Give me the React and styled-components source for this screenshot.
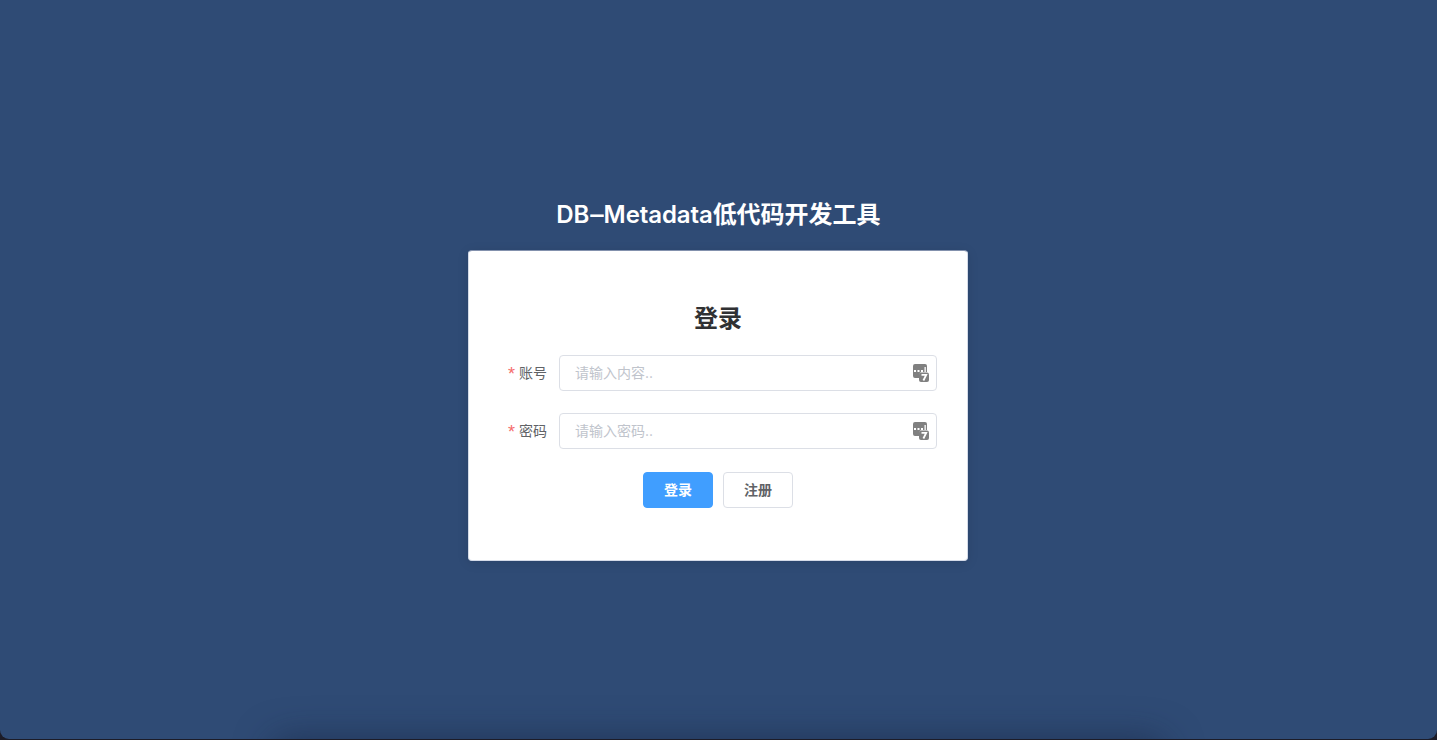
import React from "react";
import styled, { createGlobalStyle } from "styled-components";

const GlobalStyle = createGlobalStyle`
  * { box-sizing: border-box; }
  html, body { margin: 0; height: 100%; background: #1c1c28; }
  body, input, button { font-family: Inter, "Noto Sans CJK SC", sans-serif; }
`;

const Page = styled.main`
  position: relative;
  height: 739px;
  padding-top: 197px;
  display: flex;
  flex-direction: column;
  align-items: center;
  overflow: hidden;
  background: #2f4b75;
  border-radius: 0 0 9px 9px;
`;

const DockShadow = styled.div`
  position: absolute;
  left: 275px;
  right: 275px;
  bottom: -34px;
  height: 30px;
  border-radius: 20px;
  box-shadow: 0 0 36px 4px rgba(20, 32, 60, 0.55);
`;

const Title = styled.h1`
  margin: 0 0 17px;
  height: 36px;
  line-height: 36px;
  font-size: 24px;
  font-weight: 600;
  color: #fff;
  white-space: nowrap;
`;

const Latin = styled.span`
  letter-spacing: -0.1px;
`;

const Dash = styled.span`
  display: inline-block;
  transform: scaleX(1.12);
  margin: 0 1.2px;
`;

const Card = styled.form`
  width: 500px;
  height: 311px;
  margin-right: 1px;
  padding: 50px 30px 0 40px;
  display: flex;
  flex-direction: column;
  background: #fff;
  border: 1px solid #d5dbe8;
  border-top-color: #8391ad;
  border-radius: 4px;
  box-shadow: 0 2px 12px rgba(0, 0, 0, 0.1);
`;

const Heading = styled.h2`
  margin: 0 10px 18px 0;
  height: 36px;
  line-height: 36px;
  text-align: center;
  font-size: 24px;
  font-weight: 700;
  color: #303133;
`;

const Field = styled.div`
  display: flex;
  align-items: center;
  height: 36px;
  margin-bottom: ${(p) => p.$gap};
`;

const Label = styled.label`
  width: 50px;
  height: 36px;
  padding-bottom: 2px;
  flex: none;
  display: flex;
  align-items: center;
  font-size: 14px;
  color: #606266;
`;

const Required = styled.span`
  width: 11px;
  margin-left: -1px;
  font-family: "Liberation Sans", sans-serif;
  font-size: 18px;
  line-height: 20px;
  padding-top: 4px;
  color: #f56c6c;
`;

const InputBox = styled.div`
  flex: none;
  width: 378px;
  height: 36px;
  display: flex;
  align-items: center;
  padding: 0 6px 0 15px;
  border: 1px solid #dcdfe6;
  border-radius: 4px;
  background: #fff;
`;

const Input = styled.input`
  flex: 1;
  min-width: 0;
  height: 32px;
  padding: 0 0 2px;
  border: 0;
  outline: 0;
  font-size: 14px;
  color: #606266;
  background: transparent;
  &::placeholder { color: #c0c4cc; opacity: 1; }
`;

const Actions = styled.div`
  display: flex;
  justify-content: center;
  gap: 10px;
  margin-right: 10px;
`;

const Button = styled.button`
  width: 70px;
  height: 36px;
  padding: 0 0 2px;
  border: 1px solid ${(p) => (p.$primary ? "#409eff" : "#dcdfe6")};
  border-radius: 4px;
  background: ${(p) => (p.$primary ? "#409eff" : "#fff")};
  color: ${(p) => (p.$primary ? "#fff" : "#606266")};
  font-size: 14px;
  font-weight: ${(p) => (p.$primary ? 700 : 600)};
`;

const PasswordIcon = () => (
  <svg width="18" height="20" viewBox="0 0 18 20" aria-hidden="true">
    <path d="M3 1h10a2 2 0 0 1 2 2v6h-5.500a2 2 0 0 0-2 2v4H3a2 2 0 0 1-2-2V3a2 2 0 0 1 2-2Z" fill="#808080" />
    <path d="M2 7h2v2h-2zM5.500 7h2v2h-2zM9 7h2v2h-2zM12.500 4h1.300v5h-1.300z" fill="#fff" />
    <rect x="7" y="9.500" width="10" height="9.500" rx="2" fill="#808080" />
    <path d="M9.500 11.800h4.700l-2.800 5.700" fill="none" stroke="#fff" strokeWidth="1.800" />
  </svg>
);

function FormField({ id, label, placeholder, type, gap }) {
  return (
    <Field $gap={gap}>
      <Label htmlFor={id}><Required>*</Required>{label}</Label>
      <InputBox>
        <Input id={id} type={type} placeholder={placeholder} />
        <PasswordIcon />
      </InputBox>
    </Field>
  );
}

export default function App() {
  return (
    <>
      <GlobalStyle />
      <Page>
        <Title><Latin>DB<Dash>–</Dash>Metadata</Latin>低代码开发工具</Title>
        <Card onSubmit={(e) => e.preventDefault()}>
          <Heading>登录</Heading>
          <FormField id="account" label="账号" type="text" placeholder="请输入内容.." gap="22px" />
          <FormField id="password" label="密码" type="password" placeholder="请输入密码.." gap="23px" />
          <Actions>
            <Button type="submit" $primary>登录</Button>
            <Button type="button">注册</Button>
          </Actions>
        </Card>
        <DockShadow />
      </Page>
    </>
  );
}
